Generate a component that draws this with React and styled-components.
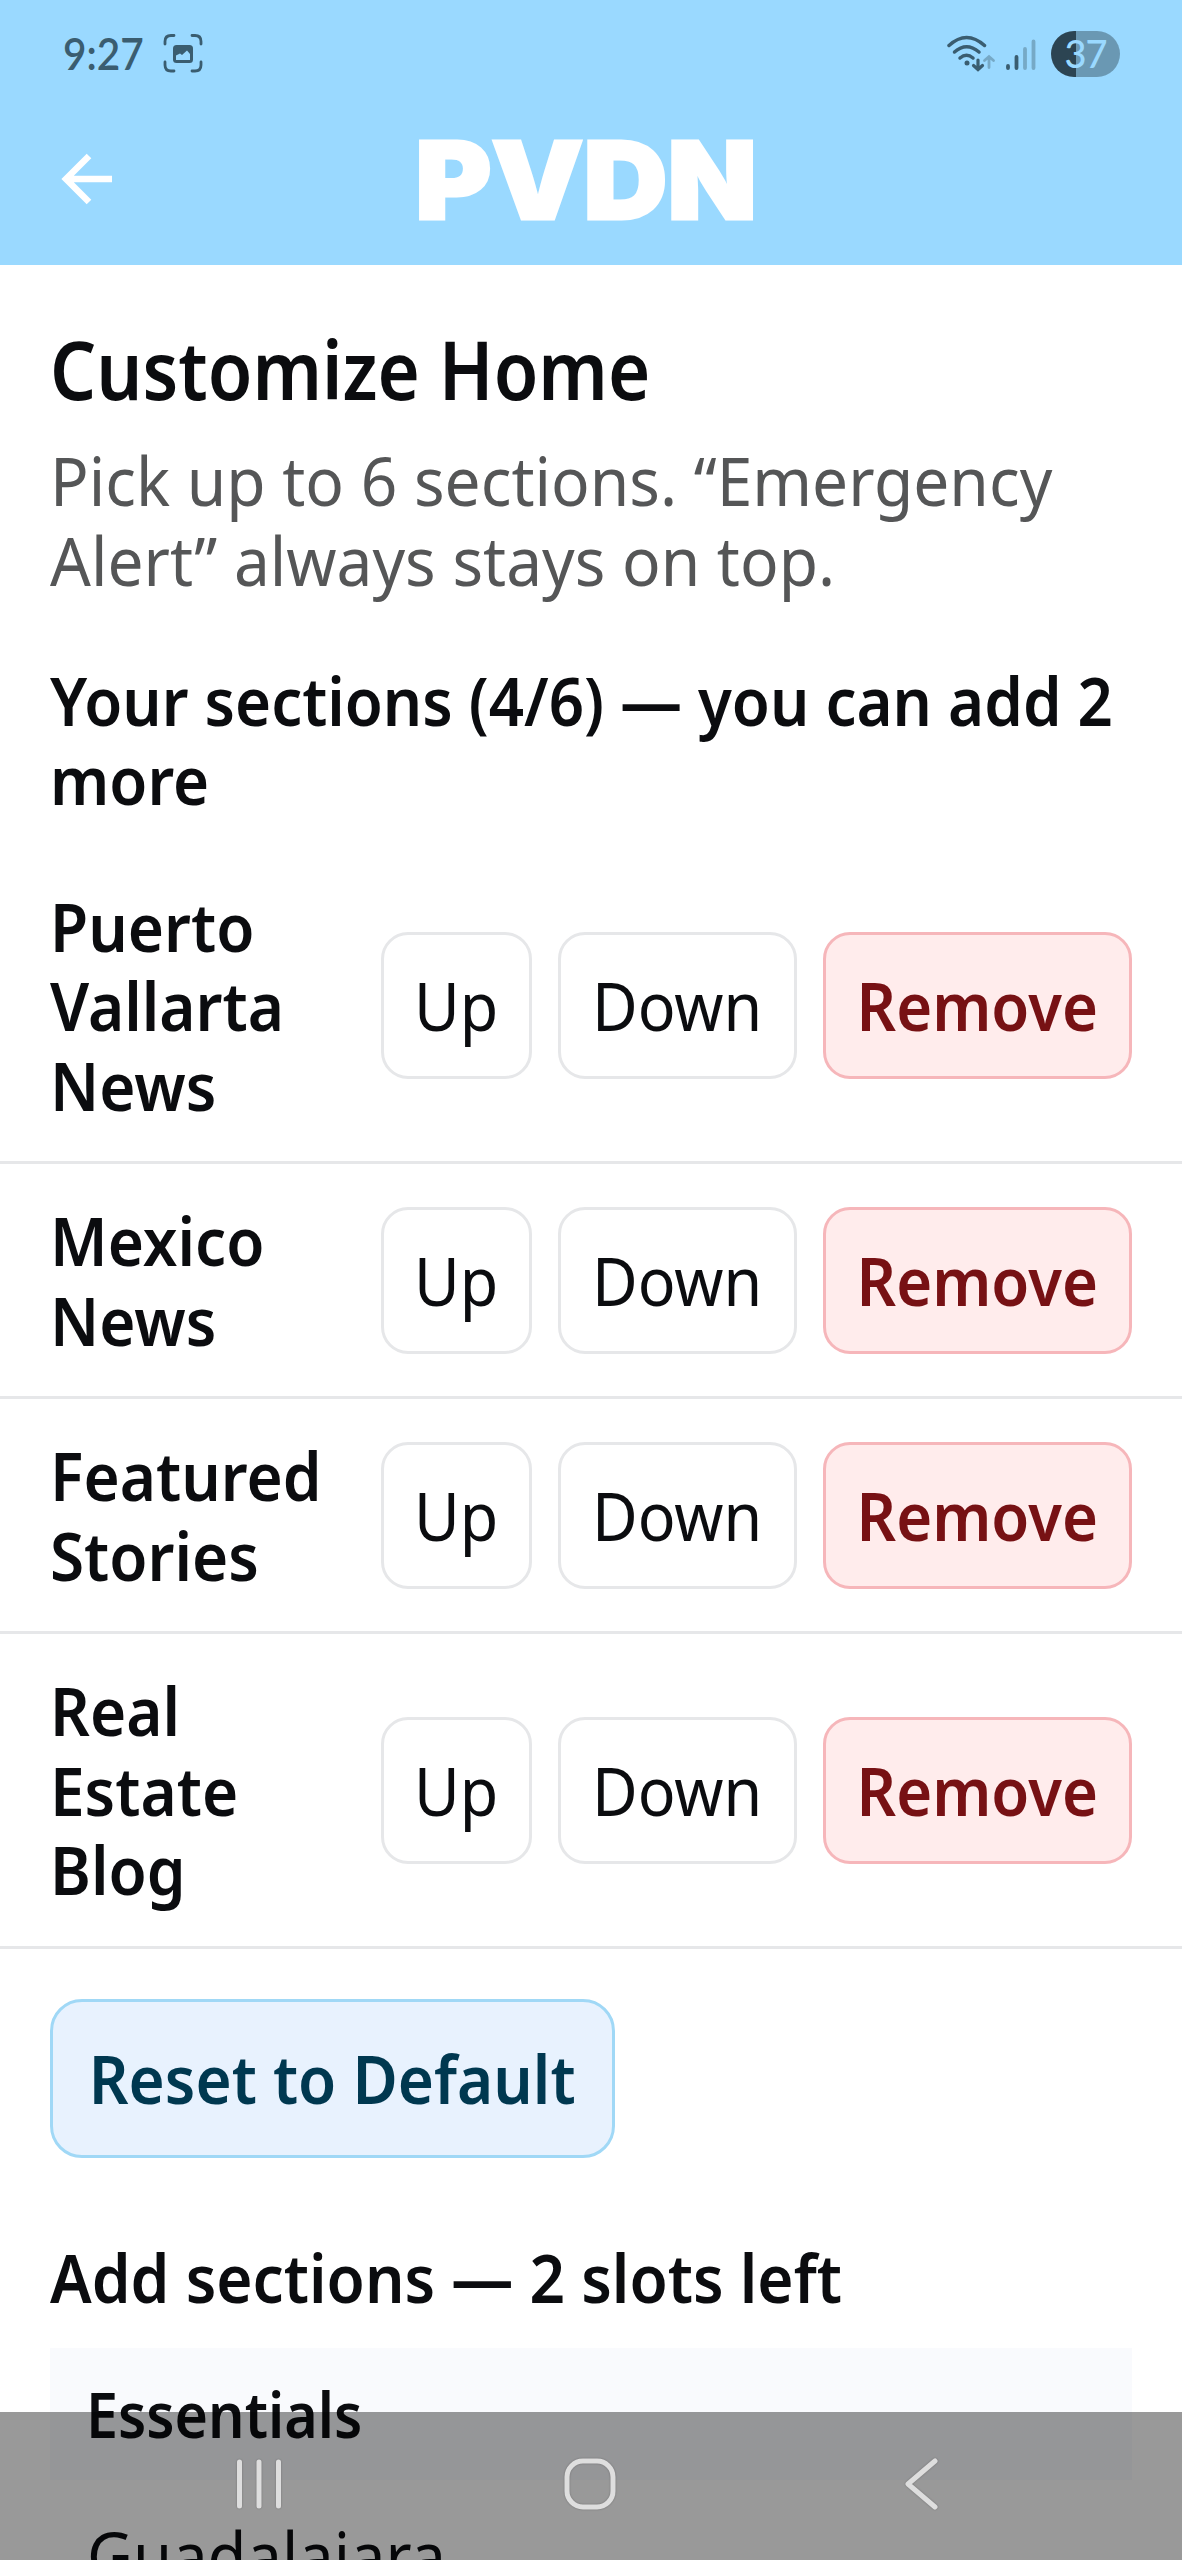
import styled, { createGlobalStyle } from 'styled-components'

const GlobalStyle=createGlobalStyle`
  *{
    box-sizing: border-box;
  }
  body{
    margin: 0;
    background-color: white;
    font-family: 'Noto Sans', 'Open Sans', sans-serif;
    color: #0b0c0f;
  }
`;

const Screen=styled.div`
  width: 100%;
  height: 2560px;
  overflow: hidden;
  display: flex;
  flex-direction: column;
`;

const Top=styled.header`
  height: 265px;
  flex: none;
  background-color: #9ad9ff;
`;

const StatusBar=styled.div`
  height: 108px;
  padding: 0 62px 0 63px;
  display: flex;
  align-items: center;
  justify-content: space-between;
`;

const StatusGroup=styled.div`
  display: flex;
  align-items: center;
  gap: ${p=>p.$gap || 0}px;
`;

const Clock=styled.div`
  width: 100px;
  font-family: Lato, sans-serif;
  font-size: 45px;
  line-height: 54px;
  padding-bottom: 3px;
  font-weight: 600;
  color: #3a5d70;
  transform: scaleX(0.9);
  transform-origin: left;
`;

const Battery=styled.div`
  width: 69px;
  height: 46px;
  border-radius: 23px;
  margin-left: 5px;
  padding-bottom: 2px;
  display: flex;
  align-items: center;
  justify-content: center;
  font-family: Lato, sans-serif;
  font-size: 38px;
  line-height: 44px;
  font-weight: 500;
  letter-spacing: -1px;
  color: #9ad9ff;
  background: linear-gradient(to right, #2c4452 0 25px, #6a98b3 25px);
`;

const AppBar=styled.div`
  height: 142px;
  display: grid;
  grid-template-columns: 200px 1fr 200px;
  align-items: center;
  padding: 0 17px 0 7px;
`;

const BackButton=styled.button`
  width: 160px;
  height: 100px;
  padding: 0;
  border: none;
  background: none;
  display: flex;
  align-items: center;
  justify-content: center;
`;

const Logo=styled.div`
  padding-top: 2px;
  text-align: center;
  font-family: Inter, sans-serif;
  font-size: 107px;
  line-height: 140px;
  font-weight: 900;
  color: white;
  -webkit-text-stroke: 3px white;
  transform: scaleX(1.085);
`;

const Content=styled.main`
  flex: 1;
  padding-top: 53px;
`;

/* narrows the face a little, $k is the horizontal scale */
const Text=styled.div`
  width: calc(100% / ${p=>p.$k});
  flex: none;
  transform: scaleX(${p=>p.$k});
  transform-origin: left;
  font-size: 67px;
  line-height: 79.5px;
`;

const Title=styled(Text)`
  font-size: 82px;
  line-height: 100px;
  font-weight: 600;
`;

const Subtitle=styled(Text)`
  margin-top: 23px;
  color: #555657;
`;

const Heading=styled(Text)`
  margin-top: ${p=>p.$gap}px;
  font-weight: 600;
`;

const Block=styled.div`
  padding: 0 50px;
`;

const List=styled.div`
  margin-top: 30px;
`;

const Row=styled.div`
  display: flex;
  align-items: center;
  justify-content: space-between;
  padding: 37px 50px 36px;
  border-bottom: 3px solid #e6e7e9;
`;

const Name=styled.div`
  width: 280px;
`;

const NameText=styled(Text)`
  font-weight: 600;
`;

const Actions=styled.div`
  display: flex;
  gap: 25.5px;
`;

const Button=styled.button`
  width: ${p=>p.$w}px;
  height: 147px;
  padding: 0;
  display: flex;
  align-items: center;
  justify-content: center;
  font-family: inherit;
  font-size: 67px;
  line-height: 79px;
  border-radius: 27px;
  border: 3px solid ${p=>p.$danger ? '#f6b6ba' : '#e6e7e9'};
  background-color: ${p=>p.$danger ? '#ffecec' : 'white'};
  color: ${p=>p.$danger ? '#771114' : '#0b0c0f'};
  font-weight: ${p=>p.$danger ? 600 : 400};
`;

const ResetButton=styled(Button)`
  height: 159px;
  margin-top: 50px;
  border-radius: 32px;
  border-color: #a0d8f6;
  background-color: #e8f2fe;
  color: #003850;
  font-weight: 600;
`;

const Label=styled.span`
  flex: none;
  white-space: nowrap;
  transform: scaleX(${p=>p.$k});
`;

const Group=styled.div`
  margin-top: 31px;
`;

const GroupHeader=styled.div`
  height: 132px;
  padding: 0 36px;
  display: flex;
  align-items: center;
  background-color: #f9fafd;
`;

const GroupTitle=styled(Text)`
  font-size: 63px;
  font-weight: 600;
`;

const GroupItem=styled.div`
  padding: 36px 37px;
`;

const NavBar=styled.nav`
  position: fixed;
  left: 0;
  right: 0;
  bottom: 0;
  height: 148px;
  padding: 3px 3px 7px 0;
  background-color: rgba(0,0,0,0.4);
  display: grid;
  grid-template-columns: repeat(3, 331px);
  justify-content: center;
  align-items: center;
  justify-items: center;
`;

const NavIcon=styled.svg`
  fill: none;
  stroke: #dedede;
  stroke-width: 5;
  stroke-linecap: round;
  stroke-linejoin: round;
  filter: drop-shadow(0 0 1px rgba(0,0,0,0.25));
`;

const CaptureIcon=()=>(
  <svg width="40" height="40" viewBox="0 0 40 40" fill="none">
    <path d="M11 1.500H8Q2 1.500 2 7.500V10M29 1.500H32Q38 1.500 38 7.500V10M2 28V31Q2 37 8 37H11M38 28V31Q38 37 32 37H29" stroke="#3a5d70" strokeWidth="2.800" strokeLinecap="round"/>
    <rect x="10" y="11" width="20" height="18" rx="3.500" fill="#3a5d70"/>
    <path d="M13 26V21.500L17 19.500L19 21L24 16.500L27 20V26Z" fill="#9ad9ff"/>
  </svg>
);

const WifiIcon=()=>(
  <svg width="50" height="40" viewBox="0 0 50 40" fill="none" stroke="#3a5d70" strokeWidth="3.500" strokeLinecap="round">
    <path d="M3 11.500Q20.500 -4.500 38.500 11.500"/>
    <path d="M8.500 18Q20.500 7.500 33 18"/>
    <path d="M14 24Q20.500 18.500 27 24"/>
    <circle cx="21" cy="29" r="2.500" fill="#3a5d70" stroke="none"/>
    <path d="M32 26V35M27.500 31.500L32 35.500L36.500 31.500" strokeWidth="3.200"/>
    <path d="M43 33.500V23M38.500 26.500L43 22.500L47.500 26.500" stroke="#76a9c6" strokeWidth="2.800"/>
  </svg>
);

const SignalIcon=()=>(
  <svg width="32" height="34" viewBox="0 0 32 34" strokeWidth="3.800" strokeLinecap="round">
    <path d="M3 29V31M11.500 20V31" stroke="#3a5d70"/>
    <path d="M20 12V31M28.500 4.500V31" stroke="#76a9c6"/>
  </svg>
);

const BackIcon=()=>(
  <svg width="52" height="52" viewBox="0 0 52 52" fill="none" stroke="white" strokeWidth="6.500">
    <path d="M51 26H6M28 3L5 26L28 49"/>
  </svg>
);

const sections=['Puerto Vallarta News','Mexico News','Featured Stories','Real Estate Blog'];

function App() {
  return (
      <>
        <GlobalStyle/>
        <Screen>
            <Top>
              <StatusBar>
                <StatusGroup>
                  <Clock>9:27</Clock>
                  <CaptureIcon/>
                </StatusGroup>
                <StatusGroup $gap={9}>
                  <WifiIcon/>
                  <SignalIcon/>
                  <Battery>37</Battery>
                </StatusGroup>
              </StatusBar>
              <AppBar>
                <BackButton aria-label="Back"><BackIcon/></BackButton>
                <Logo>PVDN</Logo>
              </AppBar>
            </Top>
            <Content>
              <Block>
                <Title $k={0.884}>Customize Home</Title>
                <Subtitle $k={0.955}>Pick up to 6 sections. “Emergency Alert” always stays on top.</Subtitle>
                <Heading $k={0.922} $gap={60.5}>Your sections (4/6) — you can add 2 more</Heading>
              </Block>
              <List>
                {sections.map((name)=>(
                  <Row key={name}>
                    <Name><NameText $k={0.926}>{name}</NameText></Name>
                    <Actions>
                      <Button $w={151}><Label $k={0.935}>Up</Label></Button>
                      <Button $w={239.5}><Label $k={0.935}>Down</Label></Button>
                      <Button $w={309.5} $danger><Label $k={0.92}>Remove</Label></Button>
                    </Actions>
                  </Row>
                ))}
              </List>
              <Block>
                <ResetButton $w={565}><Label $k={0.925}>Reset to Default</Label></ResetButton>
                <Heading $k={0.927} $gap={80}>Add sections — 2 slots left</Heading>
                <Group>
                  <GroupHeader><GroupTitle $k={0.91}>Essentials</GroupTitle></GroupHeader>
                  <GroupItem><Text $k={0.944}>Guadalajara</Text></GroupItem>
                </Group>
              </Block>
            </Content>
            <NavBar>
              <NavIcon width="50" height="56"><path d="M5.500 6V50M25 6V50M44.500 6V50"/></NavIcon>
              <NavIcon width="56" height="56"><rect x="5" y="5" width="46" height="46" rx="16"/></NavIcon>
              <NavIcon width="40" height="56"><path d="M34 5L7 28L34 51"/></NavIcon>
            </NavBar>
        </Screen>
      </>
  );
}

export default App;
